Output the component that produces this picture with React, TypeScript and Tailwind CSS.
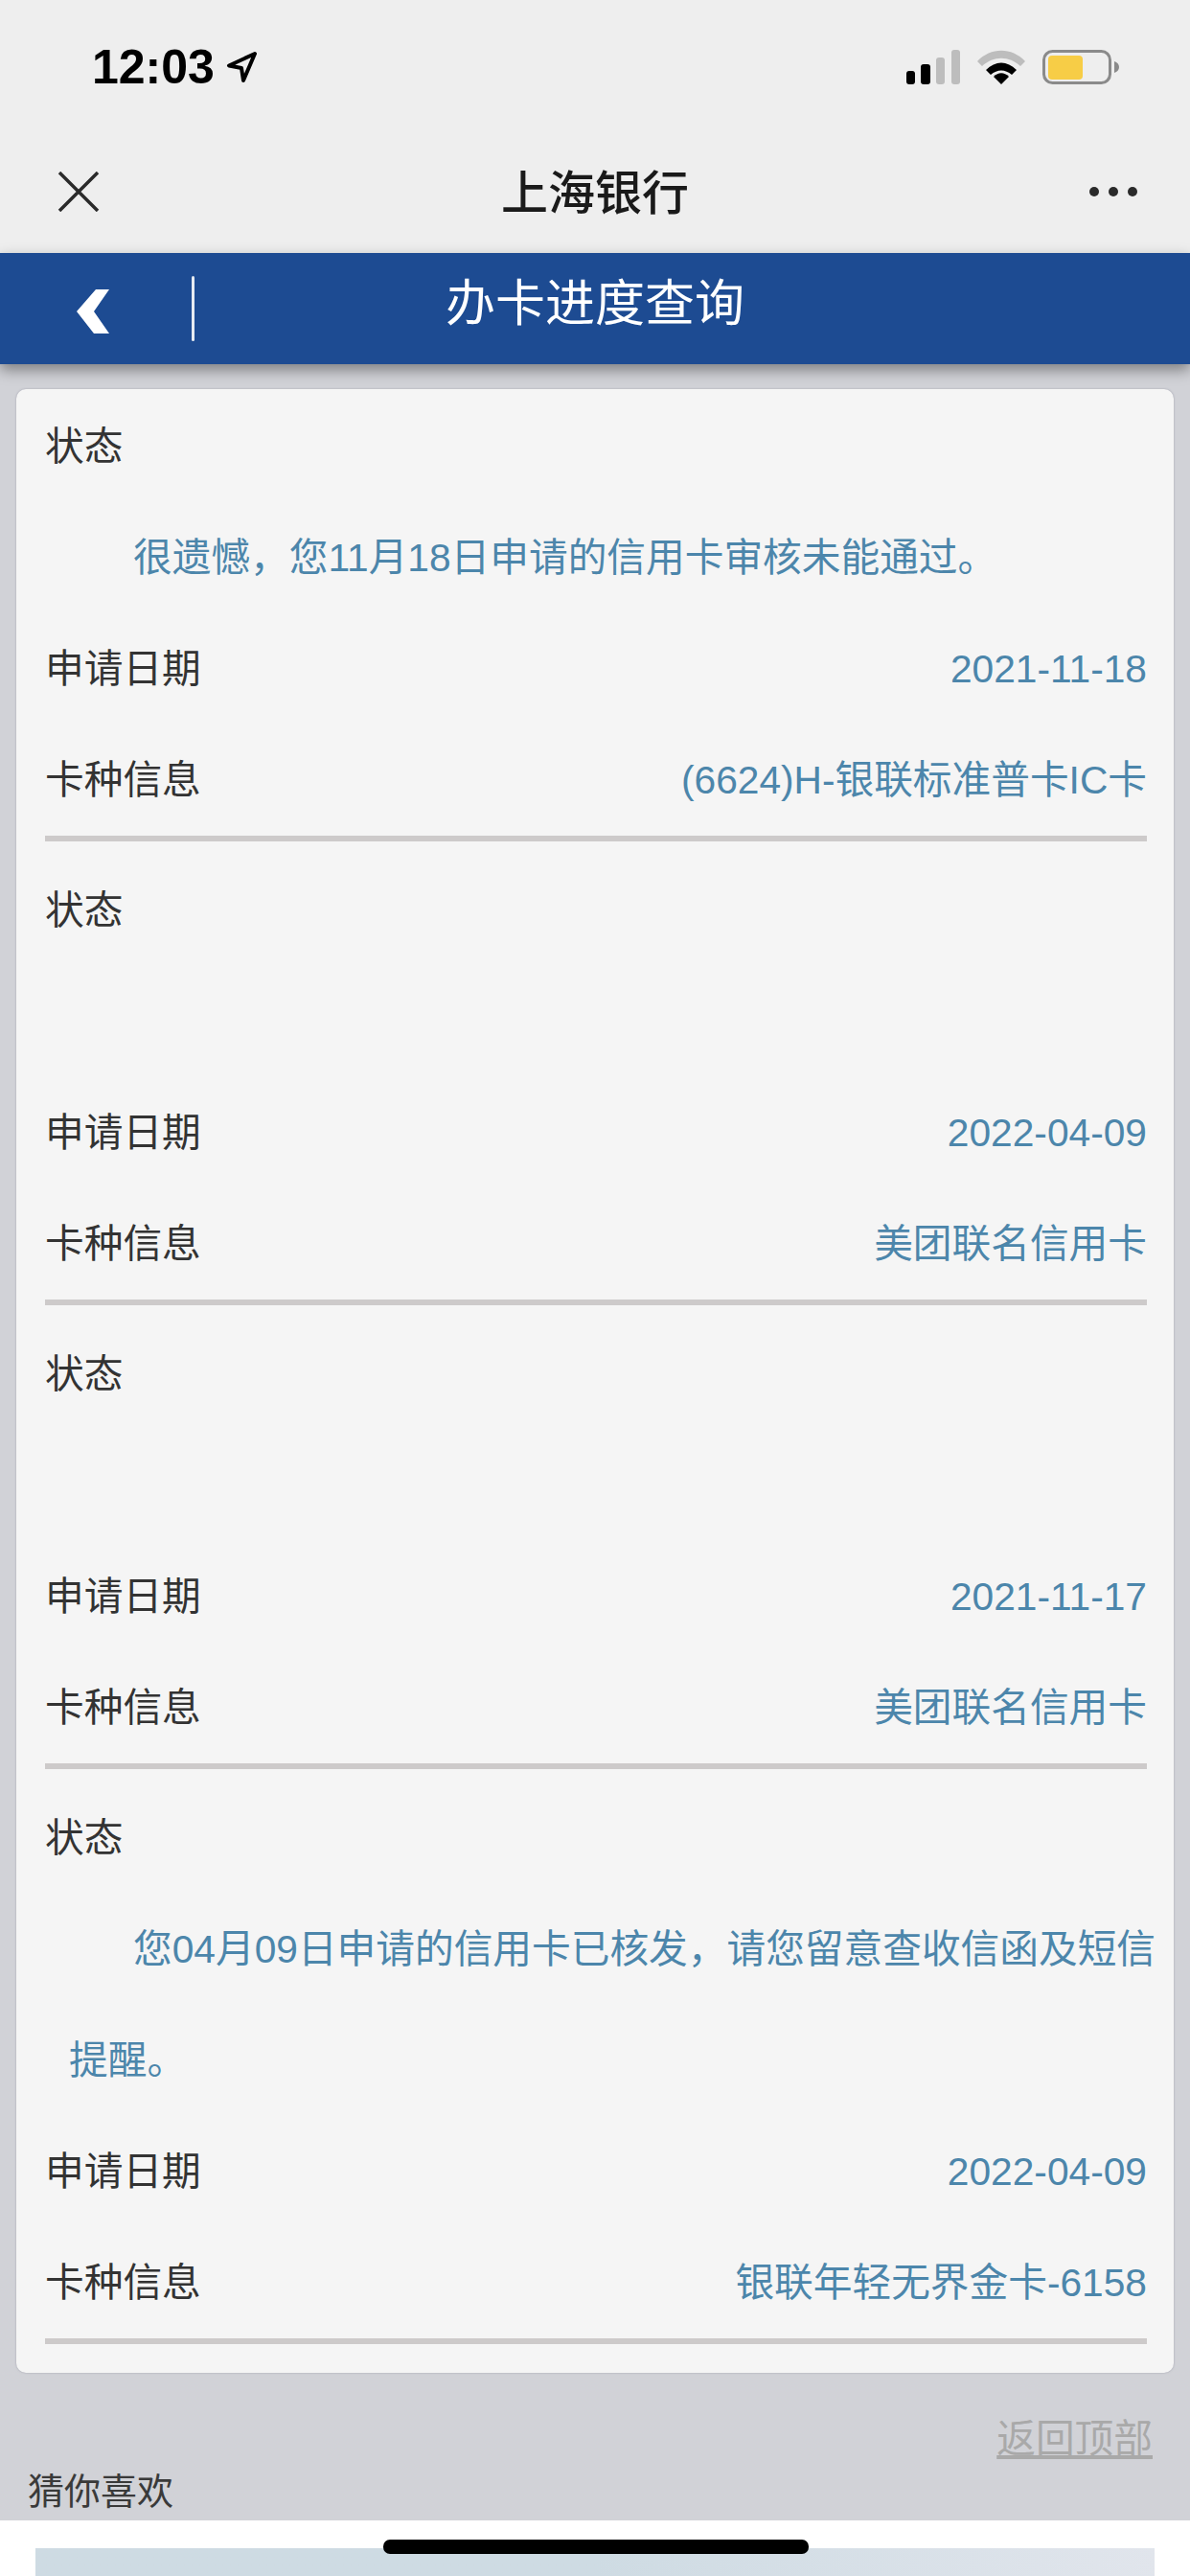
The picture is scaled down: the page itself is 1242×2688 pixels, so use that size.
const font = { fontFamily: '"Liberation Sans","Noto Sans CJK SC",sans-serif' };

function Row({ label, value }: { label: string; value: string }) {
  return (
    <div className="flex h-[116px] items-center justify-between pt-[1px]">
      <span className="text-[#333333]">{label}</span>
      <span className="text-[#4c86ab]">{value}</span>
    </div>
  );
}

function Section({ message, date, card }: { message?: string; date: string; card: string }) {
  return (
    <div className="mb-[14px]">
      <div className="flex h-[116px] items-center pt-[1px] text-[#333333]">状态</div>
      {message ? (
        <p className="ml-[25px] mr-[-12px] indent-[67px] leading-[116px] text-[#4c86ab]">{message}</p>
      ) : (
        <div className="h-[116px]" />
      )}
      <Row label="申请日期" value={date} />
      <Row label="卡种信息" value={card} />
      <div className="h-[6px] bg-[#cdcaca]" />
    </div>
  );
}

function StatusIcons() {
  return (
    <div className="flex items-center gap-[18px]">
      <svg width="56" height="36" viewBox="0 0 56 36">
        <rect x="0" y="22" width="9" height="14" rx="3" fill="#000" />
        <rect x="15" y="15" width="10" height="21" rx="3" fill="#000" />
        <rect x="31" y="8" width="9" height="28" rx="3" fill="#bdbdbd" />
        <rect x="47" y="0" width="9" height="36" rx="3" fill="#bdbdbd" />
      </svg>
      <svg width="50" height="36" viewBox="0 0 50 36">
        <path d="M0 12 C14 -3 36 -3 50 12 L45 17 C33 6 17 6 5 17 Z" fill="#bdbdbd" />
        <path d="M9 21 C19 11 31 11 41 21 L36 26 C29 20 21 20 14 26 Z" fill="#000" />
        <path d="M17 28 C22 23 28 23 33 28 L25 36 Z" fill="#000" />
      </svg>
      <svg width="80" height="36" viewBox="0 0 80 36">
        <rect x="1.5" y="1.5" width="69" height="33" rx="9" fill="none" stroke="#8a8a8a" stroke-width="3" />
        <rect x="6" y="6" width="36" height="25" rx="4" fill="#f7cd46" />
        <path d="M75 12 C78 13 80 15 80 18 C80 21 78 23 75 24 Z" fill="#8a8a8a" />
      </svg>
    </div>
  );
}

export default function App() {
  return (
    <div style={font} className="relative flex h-[2688px] w-[1242px] flex-col overflow-hidden bg-[#d1d2d7] text-[40.7px]">
      <div className="bg-[#eeeeee]">
        <div className="flex h-[132px] items-center justify-between pl-[96px] pr-[74px] pt-[8px]">
          <div className="flex items-center gap-[12px]">
            <span className="text-[50px] leading-none font-bold text-black">12:03</span>
            <svg width="33" height="34" viewBox="0 0 33 34">
              <path d="M30 3 L3 15.5 L16 18 L18 31 Z" fill="none" stroke="#000" stroke-width="4" stroke-linejoin="round" />
            </svg>
          </div>
          <StatusIcons />
        </div>
        <div className="grid h-[132px] grid-cols-[1fr_auto_1fr] items-center pl-[60px] pr-[60px] pt-[9px]">
          <svg width="44" height="42" viewBox="0 0 44 42" className="-mt-[6px]">
            <path d="M2 1 L42 41 M42 1 L2 41" fill="none" stroke="#2a2a2a" stroke-width="3.5" />
          </svg>
          <span className="text-[49px] leading-none font-medium text-[#1a1a1a]">上海银行</span>
          <div className="-mr-[5px] -mt-[6px] flex justify-end gap-[10px]">
            <span className="h-[10px] w-[10px] rounded-full bg-[#2a2a2a]" />
            <span className="h-[10px] w-[10px] rounded-full bg-[#2a2a2a]" />
            <span className="h-[10px] w-[10px] rounded-full bg-[#2a2a2a]" />
          </div>
        </div>
      </div>
      <div className="flex h-[116px] items-center bg-[#1d4b92] pl-[80px] shadow-[0_6px_14px_rgba(0,0,0,0.4)]">
        <svg width="35" height="46" viewBox="0 0 35 46" className="mt-[5px]">
          <path d="M20 0 L34 0 L18 23 L34 46 L18 46 L0 23 Z" fill="#fff" />
        </svg>
        <div className="ml-[85px] h-[68px] w-[3px] rounded-full bg-[#e6ebf2]" />
        <span className="ml-[262px] pb-[10px] text-[52px] leading-none text-white">办卡进度查询</span>
      </div>
      <div className="mx-[17px] mt-[26px] h-[2070px] rounded-[10px] bg-[#f5f5f5] pl-[30px] pr-[28px] pt-[2px] shadow-[0_0_2px_rgba(100,100,120,0.5)]">
        <Section message="很遗憾，您11月18日申请的信用卡审核未能通过。" date="2021-11-18" card="(6624)H-银联标准普卡IC卡" />
        <Section date="2022-04-09" card="美团联名信用卡" />
        <Section date="2021-11-17" card="美团联名信用卡" />
        <Section message="您04月09日申请的信用卡已核发，请您留意查收信函及短信提醒。" date="2022-04-09" card="银联年轻无界金卡-6158" />
      </div>
      <div className="flex justify-end pr-[39px] pt-[43px]">
        <span className="leading-[52px] text-[#a9a9a9] underline">返回顶部</span>
      </div>
      <div className="pl-[29px] pt-[3px] text-[38px] leading-[52px] text-[#3a3a3a]">猜你喜欢</div>
      <div className="mt-[4px] flex-1 bg-white px-[37px] pt-[29px]">
        <div className="h-full bg-gradient-to-r from-[#cedbe3] via-[#cedbe3] to-[#e1e5ec]" />
      </div>
      <div className="absolute left-[400px] top-[2650px] h-[15px] w-[444px] rounded-[7px] bg-black" />
    </div>
  );
}
